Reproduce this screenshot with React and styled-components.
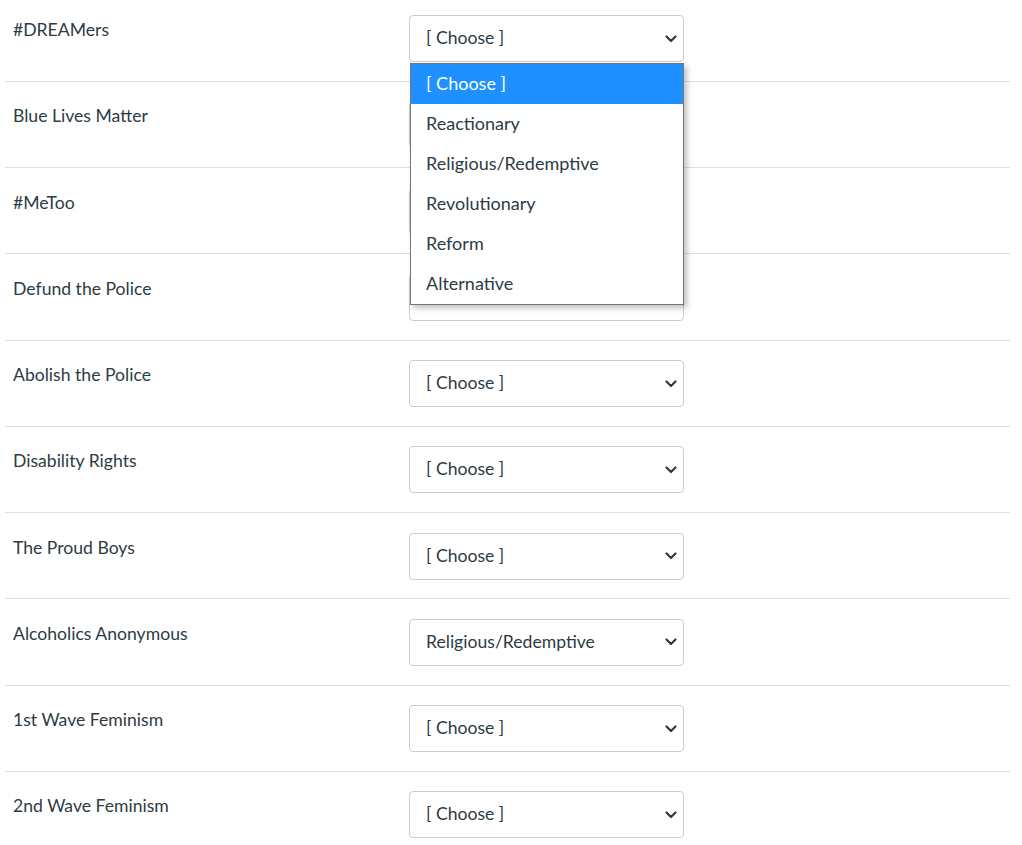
import React from "react";
import styled, { createGlobalStyle } from "styled-components";

const Global = createGlobalStyle`
  html, body { margin: 0; padding: 0; background: #ffffff; }
  body {
    font-family: Lato, "Noto Sans", "Liberation Sans", sans-serif;
    color: #2d3b45;
    font-size: 17.6px;
  }
`;

const Page = styled.div`
  margin: -4.5px 12px 0 5px;
  width: 1005px;
`;

const Row = styled.div`
  display: flex;
  align-items: flex-start;
  padding: 19.5px 0 18.75px;
  border-bottom: 1px solid #dcdfe1;
`;

const Label = styled.div`
  width: 404px;
  padding: 2px 0 0 8px;
  box-sizing: border-box;
  font-size: 17.6px;
  line-height: 26.4px;
  color: #2d3b45;
`;

const SelectWrap = styled.div`
  position: relative;
  width: 275px;
`;

const SelectBox = styled.div`
  box-sizing: border-box;
  width: 275px;
  height: 47px;
  border: 1px solid #c7cdd1;
  border-radius: 4px;
  background: #fff;
  display: flex;
  align-items: center;
  justify-content: space-between;
  padding: 0 6px 2px 16px;
  font-size: 17.6px;
  color: #2d3b45;
`;

const Chevron = styled.svg`
  width: 12px;
  height: 8px;
  flex: none;
  margin-top: 2px;
`;

const Listbox = styled.ul`
  position: absolute;
  top: 48px;
  left: 1px;
  width: 274px;
  box-sizing: border-box;
  margin: 0;
  padding: 0;
  list-style: none;
  background: #fff;
  border: 1px solid #767676;
  box-shadow: 3px 3px 6px rgba(0, 0, 0, 0.25);
  z-index: 10;
`;

const Option = styled.li`
  height: 40px;
  box-sizing: border-box;
  line-height: 38px;
  padding: 0 0 2px 15px;
  font-size: 18px;
  color: ${(p) => (p.$active ? "#ffffff" : "#2d3b45")};
  background: ${(p) => (p.$active ? "#1e90ff" : "transparent")};
`;

const OPTIONS = [
  "[ Choose ]",
  "Reactionary",
  "Religious/Redemptive",
  "Revolutionary",
  "Reform",
  "Alternative",
];

const ROWS = [
  { label: "#DREAMers", value: "[ Choose ]", open: true },
  { label: "Blue Lives Matter", value: "[ Choose ]" },
  { label: "#MeToo", value: "[ Choose ]" },
  { label: "Defund the Police", value: "[ Choose ]" },
  { label: "Abolish the Police", value: "[ Choose ]" },
  { label: "Disability Rights", value: "[ Choose ]" },
  { label: "The Proud Boys", value: "[ Choose ]" },
  { label: "Alcoholics Anonymous", value: "Religious/Redemptive" },
  { label: "1st Wave Feminism", value: "[ Choose ]" },
  { label: "2nd Wave Feminism", value: "[ Choose ]" },
];

function Select({ value, open }) {
  return (
    <SelectWrap>
      <SelectBox>
        <span>{value}</span>
        <Chevron viewBox="0 0 12 8">
          <path
            d="M1.5 1.5 L6 6 L10.5 1.5"
            fill="none"
            stroke="#2d3b45"
            strokeWidth="2.2"
            strokeLinecap="round"
            strokeLinejoin="round"
          />
        </Chevron>
      </SelectBox>
      {open && (
        <Listbox>
          {OPTIONS.map((o, i) => (
            <Option key={o} $active={i === 0}>
              {o}
            </Option>
          ))}
        </Listbox>
      )}
    </SelectWrap>
  );
}

export default function App() {
  return (
    <>
      <Global />
      <Page>
        {ROWS.map((r) => (
          <Row key={r.label}>
            <Label>{r.label}</Label>
            <Select value={r.value} open={r.open} />
          </Row>
        ))}
      </Page>
    </>
  );
}
